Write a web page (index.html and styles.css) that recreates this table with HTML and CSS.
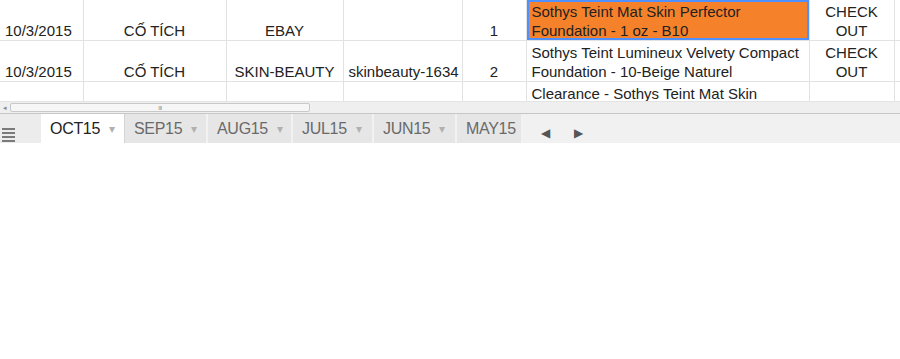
FILE: index.html
```html
<!DOCTYPE html>
<html lang="vi">
<head>
  <meta charset="UTF-8">
  <title>Orders - OCT15</title>
  <link rel="stylesheet" href="styles.css">
</head>
<body>
  <div class="sheet">
    <div class="grid">
      <table class="cells">
        <colgroup>
          <col class="c-date">
          <col class="c-shop">
          <col class="c-source">
          <col class="c-user">
          <col class="c-qty">
          <col class="c-product">
          <col class="c-status">
          <col class="c-rest">
        </colgroup>
        <tr>
          <td>10/3/2015</td>
          <td class="center">CỐ TÍCH</td>
          <td class="center">EBAY</td>
          <td></td>
          <td class="center">1</td>
          <td class="selected">Sothys Teint Mat Skin Perfector Foundation - 1 oz - B10</td>
          <td class="center">CHECK OUT</td>
          <td></td>
        </tr>
        <tr>
          <td>10/3/2015</td>
          <td class="center">CỐ TÍCH</td>
          <td class="center">SKIN-BEAUTY</td>
          <td class="nowrap">skinbeauty-1634</td>
          <td class="center">2</td>
          <td>Sothys Teint Lumineux Velvety Compact Foundation - 10-Beige Naturel</td>
          <td class="center">CHECK OUT</td>
          <td></td>
        </tr>
        <tr>
          <td></td>
          <td></td>
          <td></td>
          <td></td>
          <td></td>
          <td class="top">Clearance - Sothys Teint Mat Skin Perfector Foundation</td>
          <td></td>
          <td></td>
        </tr>
      </table>
    </div>

    <div class="hscroll">
      <span class="arrow-left">&#9666;</span>
      <div class="thumb"><span class="grip">III</span></div>
    </div>

    <div class="tabbar">
      <div class="menu">
        <svg width="13" height="14" viewBox="0 0 13 14">
          <rect x="0" y="0" width="13" height="2" fill="#7a7a7a"/>
          <rect x="0" y="4" width="13" height="2" fill="#7a7a7a"/>
          <rect x="0" y="8" width="13" height="2" fill="#7a7a7a"/>
          <rect x="0" y="12" width="13" height="2" fill="#7a7a7a"/>
        </svg>
      </div>
      <div class="tab active">OCT15 <span class="caret">&#9662;</span></div>
      <div class="tab">SEP15 <span class="caret">&#9662;</span></div>
      <div class="tab">AUG15 <span class="caret">&#9662;</span></div>
      <div class="tab">JUL15 <span class="caret">&#9662;</span></div>
      <div class="tab">JUN15 <span class="caret">&#9662;</span></div>
      <div class="tab last">MAY15</div>
      <div class="nav">
        <span>&#9664;</span>
        <span>&#9654;</span>
      </div>
    </div>
  </div>
</body>
</html>
```

FILE: styles.css
```css
body {
  margin: 0;
  background: #ffffff;
  font-family: 'Liberation Sans', Arial, sans-serif;
  color: #222;
}
.sheet {
  width: 900px;
}
.grid {
  height: 101px;
  overflow: hidden;
}
.cells {
  table-layout: fixed;
  border-collapse: collapse;
  width: 906px;
  font-size: 15px;
}
.c-date { width: 83px; }
.c-shop { width: 143px; }
.c-source { width: 117px; }
.c-user { width: 119px; }
.c-qty { width: 64px; }
.c-product { width: 283px; }
.c-status { width: 85px; }
.c-rest { width: 12px; }
.cells td {
  border-right: 1px solid #e2e2e2;
  border-bottom: 1px solid #e2e2e2;
  padding: 0 4px 0 5px;
  height: 40px;
  line-height: 19px;
  vertical-align: bottom;
  white-space: normal;
  overflow: hidden;
}
.cells td.nowrap {
  white-space: nowrap;
  padding-right: 0;
}
.cells td.center {
  text-align: center;
  padding-left: 2px;
  padding-right: 2px;
}
.cells td.top {
  vertical-align: top;
  padding-top: 2px;
}
.cells td.selected {
  background: #f6812b;
  box-shadow: inset 0 0 0 2px #4d90fe;
}
.hscroll {
  height: 12px;
  background: #efefef;
  border-top: 1px solid #e4e4e4;
  box-sizing: border-box;
  display: flex;
  align-items: center;
}
.arrow-left {
  width: 10px;
  font-size: 7px;
  color: #888;
  text-align: center;
}
.thumb {
  width: 300px;
  height: 9px;
  background: #f6f6f6;
  border: 1px solid #c8c8c8;
  border-radius: 2px;
  box-sizing: border-box;
  display: flex;
  justify-content: center;
  align-items: center;
}
.grip {
  font-size: 6px;
  color: #888;
  letter-spacing: -0.5px;
  line-height: 6px;
}
.tabbar {
  display: flex;
  height: 30px;
  background: #ececec;
  border-top: 1px solid #c6c6c6;
  box-sizing: border-box;
}
.menu {
  width: 41px;
  display: flex;
  align-items: flex-end;
  padding: 0 0 1px 2px;
  box-sizing: border-box;
}
.tab {
  display: flex;
  align-items: center;
  gap: 9px;
  height: 29px;
  padding: 0 10px 0 9px;
  background: #e6e6e6;
  border-right: 2px solid #f2f2f2;
  font-size: 16px;
  letter-spacing: -0.3px;
  color: #6a6a6a;
  box-sizing: border-box;
}
.tab.active {
  background: #ffffff;
  color: #222;
  width: 84px;
  border-right: 1px solid #d4d4d4;
}
.tab:nth-child(3) { width: 83px; }
.tab:nth-child(4) { width: 85px; }
.tab:nth-child(5) { width: 81px; }
.tab:nth-child(6) { width: 83px; }
.tab.last { width: 66px; }
.caret {
  font-size: 12px;
  color: #b0b0b0;
}
.nav {
  flex: 1;
  display: flex;
  gap: 24px;
  padding: 8px 0 0 18px;
  background: #f1f1f1;
  border-top: 1px solid #c6c6c6;
  margin-top: -1px;
  font-size: 12px;
  color: #555;
  align-items: center;
}
```
